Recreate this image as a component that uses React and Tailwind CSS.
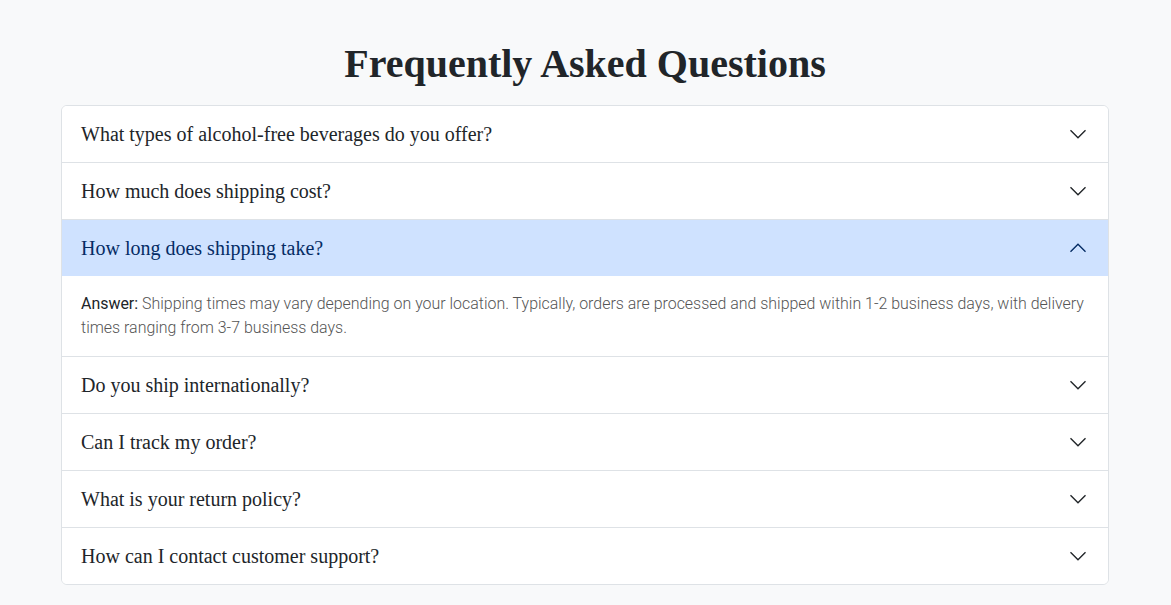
import React, { useState } from 'react';

const faqs = [
  {
    q: 'What types of alcohol-free beverages do you offer?',
    a: 'We offer a wide selection of alcohol-free beers, wines, spirits and ready-to-drink cocktails.',
  },
  {
    q: 'How much does shipping cost?',
    a: 'Shipping costs depend on your location and the size of your order.',
  },
  {
    q: 'How long does shipping take?',
    a: 'Shipping times may vary depending on your location. Typically, orders are processed and shipped within 1-2 business days, with delivery times ranging from 3-7 business days.',
  },
  { q: 'Do you ship internationally?', a: 'Yes, we ship to a selection of countries worldwide.' },
  { q: 'Can I track my order?', a: 'Yes, a tracking number is emailed once your order ships.' },
  { q: 'What is your return policy?', a: 'Unopened items can be returned within 30 days of delivery.' },
  { q: 'How can I contact customer support?', a: 'You can reach us by email or through our contact form.' },
];

const Chevron = ({ open }) => (
  <svg
    width="20"
    height="20"
    viewBox="0 0 16 16"
    fill="none"
    stroke="currentColor"
    strokeWidth="1.1"
    className={open ? 'rotate-180' : ''}
  >
    <path d="M2 5l6 6 6-6" />
  </svg>
);

const App = () => {
  const [openIdx, setOpenIdx] = useState(2);

  return (
    <div className="min-h-screen bg-[#f8f9fa] pt-[40px] font-['Liberation_Serif',serif]">
      <div className="ml-[61px] mr-[62px]">
        <h1 className="text-center text-[40px] leading-[48px] font-bold text-[#212529] mb-[17px]">
          Frequently Asked Questions
        </h1>

        <div className="bg-white border border-[#dee2e6] rounded-[6px] overflow-hidden">
          {faqs.map((item, i) => {
            const open = openIdx === i;
            return (
              <div key={i} className={i > 0 ? 'border-t border-[#dee2e6]' : ''}>
                <button
                  onClick={() => setOpenIdx(open ? -1 : i)}
                  className={`w-full flex items-center justify-between pl-[19px] pr-5 py-4 text-left text-[20px] leading-6 ${
                    open ? 'bg-[#cfe2ff] text-[#052c65]' : 'bg-white text-[#212529]'
                  }`}
                >
                  <span>{item.q}</span>
                  <Chevron open={open} />
                </button>
                {open && (
                  <div className="pl-[19px] pr-5 py-4 font-['Roboto',sans-serif] text-[15.95px] leading-6 font-light text-[#555]">
                    <span className="font-normal text-[#212529]">Answer:</span> {item.a}
                  </div>
                )}
              </div>
            );
          })}
        </div>
      </div>
    </div>
  );
};

export default App;
